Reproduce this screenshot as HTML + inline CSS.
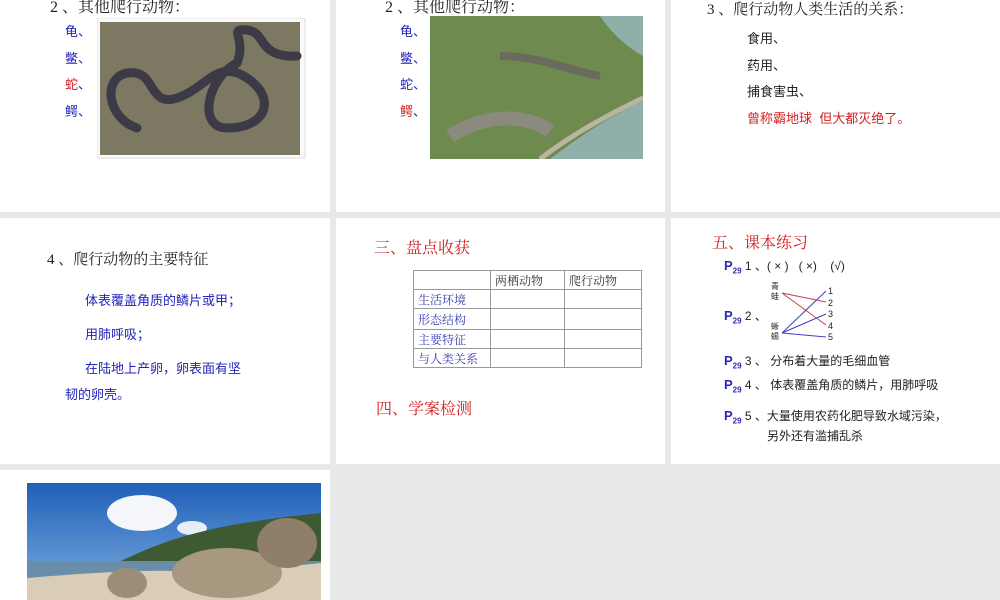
<!DOCTYPE html>
<html><head><meta charset="utf-8"><style>
body{margin:0;width:1000px;height:600px;background:#e8e8e8;position:relative;overflow:hidden;font-family:"Liberation Sans","Noto Sans CJK SC",sans-serif;}
.p{position:absolute;background:#fff;}
.t{position:absolute;white-space:nowrap;}
.b{color:#2323b8}.r{color:#d42020}
.s{font-family:"Liberation Serif","Noto Serif CJK SC",serif;}
table{border-collapse:collapse;font-family:"Liberation Serif","Noto Serif CJK SC",serif;font-size:12px;}
td{border:1px solid #999;padding:0 4px;height:18px;color:#333}
.P{color:#2a2ab8;font-weight:bold;font-size:13px}
.P sub{font-size:8px}
</style></head><body>
<div class="p" style="left:0;top:0;width:330px;height:212px"></div>
<div class="p" style="left:336px;top:0;width:329px;height:212px"></div>
<div class="p" style="left:671px;top:0;width:329px;height:212px"></div>
<div class="p" style="left:0;top:218px;width:330px;height:246px"></div>
<div class="p" style="left:336px;top:218px;width:329px;height:246px"></div>
<div class="p" style="left:671px;top:218px;width:329px;height:246px"></div>
<div class="p" style="left:0;top:470px;width:330px;height:130px"></div>

<div class="t s" style="left:50px;top:-6px;font-size:16px;color:#222">2 、其他爬行动物：</div>
<div class="t b" style="left:65px;top:19px;font-size:13px;line-height:26.5px">龟、<br>鳖、<br><span class="r">蛇</span>、<br>鳄、</div>
<svg style="position:absolute;left:97px;top:18px" width="212" height="142">
<rect x="0" y="0" width="208" height="140" fill="#fafafa" stroke="#ddd"/>
<rect x="3" y="4" width="200" height="133" fill="#7d7862"/>
<path d="M40 110 C10 100 5 60 30 55 C60 50 50 90 80 80 C110 70 120 40 150 60 C180 80 170 110 130 110 C100 110 110 60 140 45 C150 20 130 10 150 12 C170 14 160 40 200 38" stroke="#3d3a48" stroke-width="9" fill="none" stroke-linecap="round"/>
</svg>

<div class="t s" style="left:385px;top:-6px;font-size:16px;color:#222">2 、其他爬行动物：</div>
<div class="t b" style="left:400px;top:19px;font-size:13px;line-height:26.5px">龟、<br>鳖、<br>蛇、<br><span class="r">鳄</span>、</div>
<svg style="position:absolute;left:430px;top:16px" width="213" height="143">
<rect width="213" height="143" fill="#6f8a4e"/>
<path d="M170 0 L213 0 L213 40 C195 30 180 15 170 0Z" fill="#8fb0a8"/>
<path d="M120 143 C150 120 180 100 213 85 L213 143Z" fill="#8fb0a8"/>
<path d="M110 143 C140 120 175 100 213 82" stroke="#b8b6a0" stroke-width="5" fill="none"/>
<path d="M20 120 C60 95 100 100 120 115" stroke="#8a8a7e" stroke-width="14" fill="none"/>
<path d="M70 40 C110 40 140 55 170 60" stroke="#6a6a5e" stroke-width="8" fill="none"/>
</svg>

<div class="t s" style="left:707px;top:-2px;font-size:15px;color:#222">3 、爬行动物人类生活的关系：</div>
<div class="t" style="left:747px;top:26px;font-size:13px;line-height:26.5px;color:#222">食用、<br>药用、<br>捕食害虫、<br><span class="r">曾称霸地球&nbsp; 但大都灭绝了。</span></div>

<div class="t s" style="left:47px;top:248px;font-size:15px;color:#222">4 、爬行动物的主要特征</div>
<div class="t b" style="left:85px;top:290px;font-size:13px">体表覆盖角质的鳞片或甲；</div>
<div class="t b" style="left:85px;top:324px;font-size:13px">用肺呼吸；</div>
<div class="t b" style="left:85px;top:358px;font-size:13px">在陆地上产卵，卵表面有坚</div>
<div class="t b" style="left:65px;top:384px;font-size:13px">韧的卵壳。</div>

<div class="t s r" style="left:374px;top:235px;font-size:16px">三、盘点收获</div>
<table style="position:absolute;left:413px;top:270px;width:229px;border:1px solid #888">
<tr><td style="width:68px"></td><td style="width:65px">两栖动物</td><td>爬行动物</td></tr>
<tr><td style="color:#3a3ab0">生活环境</td><td></td><td></td></tr>
<tr><td style="color:#3a3ab0;height:20px">形态结构</td><td></td><td></td></tr>
<tr><td style="color:#3a3ab0">主要特征</td><td></td><td></td></tr>
<tr><td style="color:#3a3ab0">与人类关系</td><td></td><td></td></tr>
</table>
<div class="t s r" style="left:376px;top:396px;font-size:16px">四、学案检测</div>

<div class="t s r" style="left:712px;top:230px;font-size:16px">五、课本练习</div>
<div class="t" style="left:724px;top:257px;font-size:12px;color:#222"><span class="P">P<sub>29</sub></span> 1 、( × )&nbsp;&nbsp; ( ×)&nbsp;&nbsp;&nbsp; (√)</div>
<div class="t" style="left:724px;top:307px;font-size:12px;color:#222"><span class="P">P<sub>29</sub></span> 2 、</div>
<div class="t" style="left:771px;top:282px;font-size:8px;line-height:10px;color:#222">青<br>蛙</div>
<div class="t" style="left:771px;top:322px;font-size:8px;line-height:10px;color:#222">蜥<br>蜴</div>
<div class="t" style="left:828px;top:286px;font-size:9px;line-height:11.5px;color:#222">1<br>2<br>3<br>4<br>5</div>
<svg style="position:absolute;left:780px;top:285px" width="50" height="60">
<path d="M2 8 L46 17 M2 8 L46 40" stroke="#c04050" stroke-width="1" fill="none"/>
<path d="M2 48 L46 6 M2 48 L46 29 M2 48 L46 52" stroke="#4040c0" stroke-width="1" fill="none"/>
</svg>
<div class="t" style="left:724px;top:352px;font-size:12px;color:#222"><span class="P">P<sub>29</sub></span> 3 、 分布着大量的毛细血管</div>
<div class="t" style="left:724px;top:376px;font-size:12px;color:#222"><span class="P">P<sub>29</sub></span> 4 、 体表覆盖角质的鳞片，用肺呼吸</div>
<div class="t" style="left:724px;top:407px;font-size:12px;color:#222"><span class="P">P<sub>29</sub></span> 5 、大量使用农药化肥导致水域污染，</div>
<div class="t" style="left:767px;top:427px;font-size:12px;color:#222">另外还有滥捕乱杀</div>

<svg style="position:absolute;left:27px;top:483px" width="294" height="117">
<defs><linearGradient id="sk" x1="0" y1="0" x2="0" y2="1"><stop offset="0" stop-color="#1f5fb8"/><stop offset="1" stop-color="#7fb0e0"/></linearGradient></defs>
<rect width="294" height="117" fill="url(#sk)"/>
<ellipse cx="115" cy="30" rx="35" ry="18" fill="#f4f6fa"/>
<ellipse cx="165" cy="45" rx="15" ry="7" fill="#e8eef8"/>
<path d="M90 80 C150 50 200 40 294 30 L294 80Z" fill="#3e5a32"/>
<rect y="78" width="294" height="39" fill="#6a8eaa"/>
<path d="M0 117 L0 95 C60 90 120 85 200 90 L294 80 L294 117Z" fill="#d9cdb8"/>
<ellipse cx="200" cy="90" rx="55" ry="25" fill="#a89880"/>
<ellipse cx="260" cy="60" rx="30" ry="25" fill="#8e7e6a"/>
<ellipse cx="100" cy="100" rx="20" ry="15" fill="#9c8c78"/>
</svg>
</body></html>
